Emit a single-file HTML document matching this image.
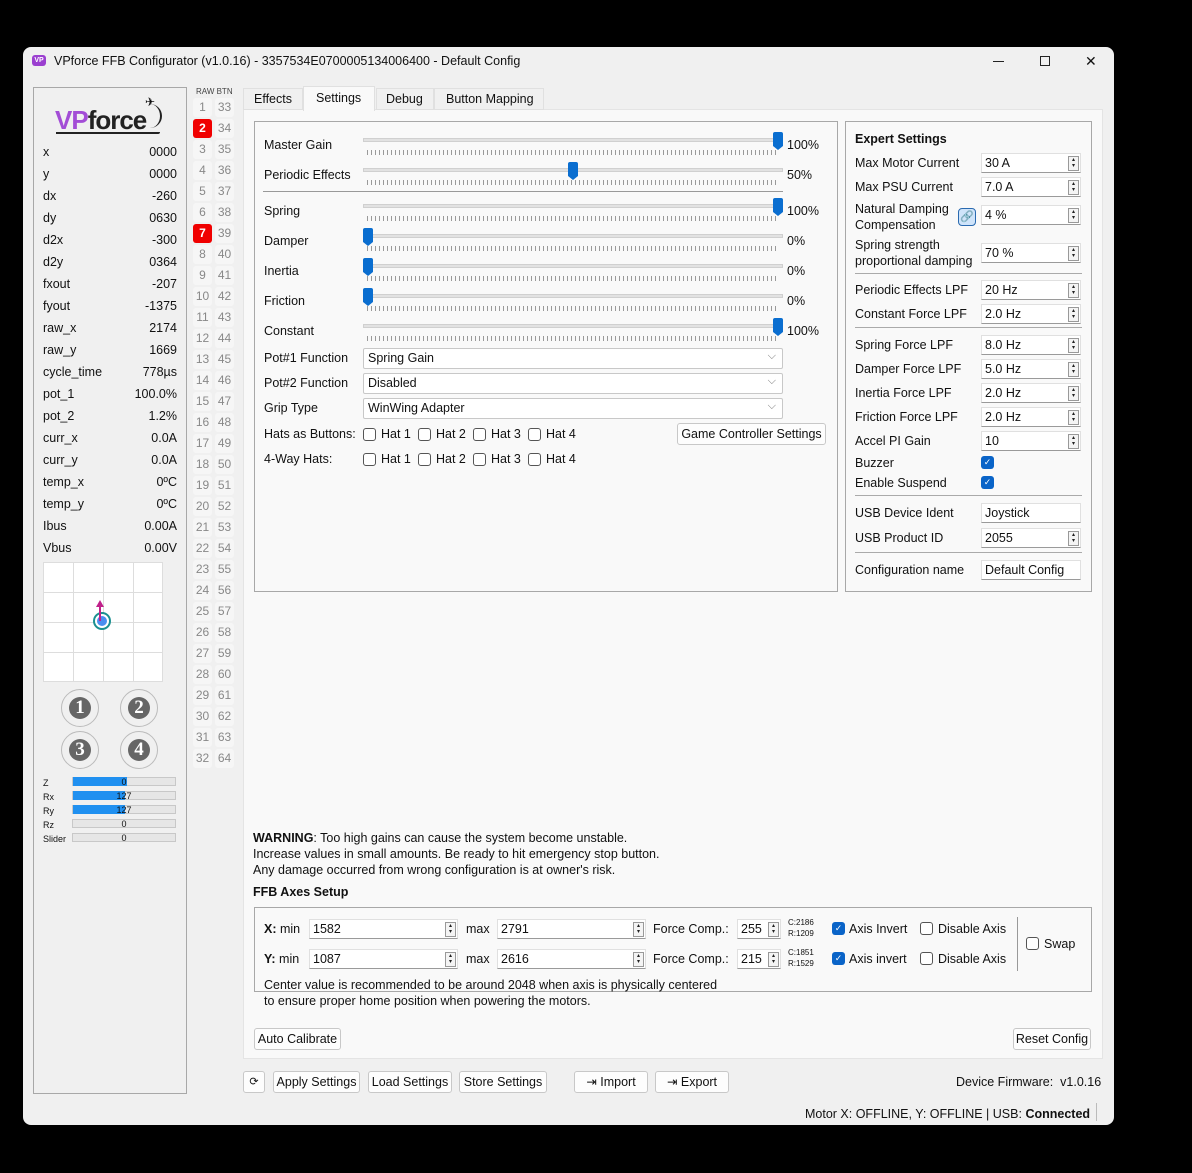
<!DOCTYPE html>
<html><head><meta charset="utf-8"><style>
*{box-sizing:border-box;margin:0;padding:0}
body{width:1192px;height:1173px;background:#000;position:relative;overflow:hidden;font-family:"Liberation Sans",sans-serif;font-size:12.5px;color:#111}
.a{position:absolute}
.t{position:absolute;line-height:16px;white-space:nowrap}
.win{position:absolute;left:23px;top:47px;width:1091px;height:1078px;background:#f0f0f0;border-radius:8px;overflow:hidden}
.box{position:absolute;border:1px solid #a8a8a8}
.btn{position:absolute;border:1px solid #c8c8c8;background:#fdfdfd;border-radius:3px;text-align:center;line-height:20px;height:22px;white-space:nowrap}
.in{position:absolute;background:#fff;border:1px solid #e0e0e0;border-bottom:1px solid #9a9a9a;height:20px;line-height:18px;padding-left:3px;white-space:nowrap}
.sp{position:absolute;right:1px;top:2px;width:11px;height:15px;border:1px solid #999;background:#f4f4f4;font-size:6px;line-height:6px;text-align:center;color:#222}
.cb{position:absolute;width:13px;height:13px;border:1px solid #555;border-radius:3px;background:#fff}
.cbc{position:absolute;width:13px;height:13px;border-radius:3px;background:#0a64c8;color:#fff;font-size:9px;line-height:13px;text-align:center}
.cell{position:absolute;width:19px;height:19px;border-radius:3px;background:#f6f6f6;color:#888;text-align:center;line-height:19px;font-size:12px}
.red{background:#f00000;color:#fff;font-weight:bold}
.trk{position:absolute;left:363px;width:420px;height:4px;background:#e2e2e2;border:1px solid #d0d0d0}
.tk{position:absolute;left:367px;width:412px;height:5px;background:repeating-linear-gradient(90deg,#999 0 1px,transparent 1px 4px)}
.hd{position:absolute;width:10px;height:14px;background:#0a6ed0;border-radius:2px 2px 0 0}
.hd:after{content:"";position:absolute;left:0;top:14px;border-left:5px solid transparent;border-right:5px solid transparent;border-top:4px solid #0a6ed0}
.cmb{position:absolute;left:363px;width:420px;height:21px;background:#fff;border:1px solid #c8c8c8;border-radius:2px;line-height:19px;padding-left:4px}
.cmb:after{content:"⌵";position:absolute;right:6px;top:-2px;color:#777;font-size:11px}
.num{position:absolute;width:38px;height:38px;border-radius:50%;border:1px solid #bbb;background:#f0f0f0}
.num div{position:absolute;left:7px;top:7px;width:22px;height:22px;border-radius:50%;background:#666;color:#fff;font-weight:bold;font-family:"Liberation Serif",serif;font-size:19px;line-height:22px;text-align:center}
.bar{position:absolute;left:72px;width:104px;height:9px;background:#e6e6e6;border:1px solid #c8c8c8;font-size:9px;line-height:8px;text-align:center}
.bar i{position:absolute;left:0;top:-1px;height:9px;background:#2090f0}
.bar span{position:relative}
</style></head><body>
<div class="win">
<div class="a" style="left:9px;top:8px;width:14px;height:11px;background:#9b3fd0;border-radius:3px;color:#fff;font-size:7px;font-weight:bold;line-height:11px;text-align:center">VP</div>
<div class="t" style="left:31px;top:6px">VPforce FFB Configurator (v1.0.16) - 3357534E0700005134006400 - Default Config</div>
<div class="a" style="left:970px;top:14px;width:11px;height:1px;background:#222"></div>
<div class="a" style="left:1017px;top:9px;width:10px;height:10px;border:1px solid #222"></div>
<div class="t" style="left:1062px;top:6px;font-size:14px">✕</div>
</div>
<div class="a" style="left:0;top:0;width:1192px;height:1173px">
<div class="box" style="left:33px;top:87px;width:154px;height:1007px"></div>
<div class="t" style="left:55px;top:106px;font-size:26px;line-height:28px;font-weight:900;letter-spacing:-1px"><span style="color:#a34dd6">VP</span><span style="color:#222">force</span></div>
<div class="a" style="left:56px;top:132px;width:104px;height:2px;background:#222;border-radius:0 0 8px 0"></div>
<div class="a" style="left:150px;top:104px;width:12px;height:24px;border-right:2px solid #222;border-radius:0 12px 12px 0"></div>
<div class="t" style="left:145px;top:94px;font-size:12px">✈</div>
<div class="t" style="left:43px;top:144px;width:134px">x<span style="float:right">0000</span></div>
<div class="t" style="left:43px;top:166px;width:134px">y<span style="float:right">0000</span></div>
<div class="t" style="left:43px;top:188px;width:134px">dx<span style="float:right">-260</span></div>
<div class="t" style="left:43px;top:210px;width:134px">dy<span style="float:right">0630</span></div>
<div class="t" style="left:43px;top:232px;width:134px">d2x<span style="float:right">-300</span></div>
<div class="t" style="left:43px;top:254px;width:134px">d2y<span style="float:right">0364</span></div>
<div class="t" style="left:43px;top:276px;width:134px">fxout<span style="float:right">-207</span></div>
<div class="t" style="left:43px;top:298px;width:134px">fyout<span style="float:right">-1375</span></div>
<div class="t" style="left:43px;top:320px;width:134px">raw_x<span style="float:right">2174</span></div>
<div class="t" style="left:43px;top:342px;width:134px">raw_y<span style="float:right">1669</span></div>
<div class="t" style="left:43px;top:364px;width:134px">cycle_time<span style="float:right">778µs</span></div>
<div class="t" style="left:43px;top:386px;width:134px">pot_1<span style="float:right">100.0%</span></div>
<div class="t" style="left:43px;top:408px;width:134px">pot_2<span style="float:right">1.2%</span></div>
<div class="t" style="left:43px;top:430px;width:134px">curr_x<span style="float:right">0.0A</span></div>
<div class="t" style="left:43px;top:452px;width:134px">curr_y<span style="float:right">0.0A</span></div>
<div class="t" style="left:43px;top:474px;width:134px">temp_x<span style="float:right">0ºC</span></div>
<div class="t" style="left:43px;top:496px;width:134px">temp_y<span style="float:right">0ºC</span></div>
<div class="t" style="left:43px;top:518px;width:134px">Ibus<span style="float:right">0.00A</span></div>
<div class="t" style="left:43px;top:540px;width:134px">Vbus<span style="float:right">0.00V</span></div>
<div class="a" style="left:43px;top:562px;width:120px;height:120px;background:#fff;border:1px solid #ddd;background-image:linear-gradient(90deg,transparent 29px,#ddd 29px,#ddd 30px,transparent 30px),linear-gradient(transparent 29px,#ddd 29px,#ddd 30px,transparent 30px);background-size:30px 30px"></div>
<div class="a" style="left:93px;top:612px;width:18px;height:18px;border-radius:50%;border:2px solid #1a9090;background:#fff"></div>
<div class="a" style="left:97px;top:616px;width:10px;height:10px;border-radius:50%;background:#4a8ef0"></div>
<div class="a" style="left:99px;top:605px;width:2px;height:16px;background:#c0208a"></div>
<div class="a" style="left:96px;top:600px;border-left:4px solid transparent;border-right:4px solid transparent;border-bottom:7px solid #c0208a"></div>
<div class="num" style="left:61px;top:689px"><div>1</div></div>
<div class="num" style="left:120px;top:689px"><div>2</div></div>
<div class="num" style="left:61px;top:731px"><div>3</div></div>
<div class="num" style="left:120px;top:731px"><div>4</div></div>
<div class="t" style="left:43px;top:775px;font-size:9px">Z</div><div class="bar" style="top:777px"><i style="width:54px"></i><span>0</span></div>
<div class="t" style="left:43px;top:789px;font-size:9px">Rx</div><div class="bar" style="top:791px"><i style="width:52px"></i><span>127</span></div>
<div class="t" style="left:43px;top:803px;font-size:9px">Ry</div><div class="bar" style="top:805px"><i style="width:52px"></i><span>127</span></div>
<div class="t" style="left:43px;top:817px;font-size:9px">Rz</div><div class="bar" style="top:819px"><span>0</span></div>
<div class="t" style="left:43px;top:831px;font-size:9px">Slider</div><div class="bar" style="top:833px"><span>0</span></div>
<div class="t" style="left:196px;top:84px;font-size:8px;color:#444">RAW BTN</div>
<div id="cells"></div>
<div class="a" style="left:243px;top:109px;width:860px;height:950px;background:#f9f9f9;border:1px solid #e4e4e4"></div>
<div class="a" style="left:243px;top:88px;width:60px;height:22px;border:1px solid #e0e0e0;background:#f0f0f0"></div>
<div class="t" style="left:254px;top:91px">Effects</div>
<div class="a" style="left:303px;top:86px;width:72px;height:25px;border:1px solid #e0e0e0;border-bottom:none;background:#f9f9f9"></div>
<div class="t" style="left:316px;top:90px">Settings</div>
<div class="a" style="left:376px;top:88px;width:58px;height:22px;border:1px solid #e0e0e0;background:#f0f0f0"></div>
<div class="t" style="left:386px;top:91px">Debug</div>
<div class="a" style="left:434px;top:88px;width:110px;height:22px;border:1px solid #e0e0e0;background:#f0f0f0"></div>
<div class="t" style="left:446px;top:91px">Button Mapping</div>
<div class="box" style="left:254px;top:121px;width:584px;height:471px"></div>
<div class="t" style="left:264px;top:137px">Master Gain</div>
<div class="trk" style="top:138px"></div><div class="tk" style="top:150px"></div><div class="hd" style="left:773px;top:132px"></div>
<div class="t" style="left:787px;top:137px">100%</div>
<div class="t" style="left:264px;top:167px">Periodic Effects</div>
<div class="trk" style="top:168px"></div><div class="tk" style="top:180px"></div><div class="hd" style="left:568px;top:162px"></div>
<div class="t" style="left:787px;top:167px">50%</div>
<div class="a" style="left:263px;top:191px;width:520px;height:1px;background:#999"></div>
<div class="t" style="left:264px;top:203px">Spring</div>
<div class="trk" style="top:204px"></div><div class="tk" style="top:216px"></div><div class="hd" style="left:773px;top:198px"></div>
<div class="t" style="left:787px;top:203px">100%</div>
<div class="t" style="left:264px;top:233px">Damper</div>
<div class="trk" style="top:234px"></div><div class="tk" style="top:246px"></div><div class="hd" style="left:363px;top:228px"></div>
<div class="t" style="left:787px;top:233px">0%</div>
<div class="t" style="left:264px;top:263px">Inertia</div>
<div class="trk" style="top:264px"></div><div class="tk" style="top:276px"></div><div class="hd" style="left:363px;top:258px"></div>
<div class="t" style="left:787px;top:263px">0%</div>
<div class="t" style="left:264px;top:293px">Friction</div>
<div class="trk" style="top:294px"></div><div class="tk" style="top:306px"></div><div class="hd" style="left:363px;top:288px"></div>
<div class="t" style="left:787px;top:293px">0%</div>
<div class="t" style="left:264px;top:323px">Constant</div>
<div class="trk" style="top:324px"></div><div class="tk" style="top:336px"></div><div class="hd" style="left:773px;top:318px"></div>
<div class="t" style="left:787px;top:323px">100%</div>
<div class="t" style="left:264px;top:350px">Pot#1 Function</div><div class="cmb" style="top:348px">Spring Gain</div>
<div class="t" style="left:264px;top:375px">Pot#2 Function</div><div class="cmb" style="top:373px">Disabled</div>
<div class="t" style="left:264px;top:400px">Grip Type</div><div class="cmb" style="top:398px">WinWing Adapter</div>
<div class="t" style="left:264px;top:426px">Hats as Buttons:</div>
<div class="cb" style="left:363px;top:428px"></div><div class="t" style="left:381px;top:426px">Hat 1</div>
<div class="cb" style="left:418px;top:428px"></div><div class="t" style="left:436px;top:426px">Hat 2</div>
<div class="cb" style="left:473px;top:428px"></div><div class="t" style="left:491px;top:426px">Hat 3</div>
<div class="cb" style="left:528px;top:428px"></div><div class="t" style="left:546px;top:426px">Hat 4</div>
<div class="btn" style="left:677px;top:423px;width:149px">Game Controller Settings</div>
<div class="t" style="left:264px;top:451px">4-Way Hats:</div>
<div class="cb" style="left:363px;top:453px"></div><div class="t" style="left:381px;top:451px">Hat 1</div>
<div class="cb" style="left:418px;top:453px"></div><div class="t" style="left:436px;top:451px">Hat 2</div>
<div class="cb" style="left:473px;top:453px"></div><div class="t" style="left:491px;top:451px">Hat 3</div>
<div class="cb" style="left:528px;top:453px"></div><div class="t" style="left:546px;top:451px">Hat 4</div>
<div class="box" style="left:845px;top:121px;width:247px;height:471px"></div>
<div class="t" style="left:855px;top:131px;font-weight:bold">Expert Settings</div>
<div class="t" style="left:855px;top:155px">Max Motor Current</div><div class="in" style="left:981px;top:153px;width:100px">30 A<div class="sp">▴<br>▾</div></div>
<div class="t" style="left:855px;top:179px">Max PSU Current</div><div class="in" style="left:981px;top:177px;width:100px">7.0 A<div class="sp">▴<br>▾</div></div>
<div class="t" style="left:855px;top:201px">Natural Damping<br>Compensation</div>
<div class="a" style="left:958px;top:208px;width:18px;height:18px;border:1px solid #2a6ab0;border-radius:4px;background:#cfe4fa;font-size:11px;text-align:center;line-height:16px">🔗</div>
<div class="in" style="left:981px;top:205px;width:100px">4 %<div class="sp">▴<br>▾</div></div>
<div class="t" style="left:855px;top:237px">Spring strength<br>proportional damping</div><div class="in" style="left:981px;top:243px;width:100px">70 %<div class="sp">▴<br>▾</div></div>
<div class="a" style="left:855px;top:273px;width:227px;height:1px;background:#aaa"></div>
<div class="t" style="left:855px;top:282px">Periodic Effects LPF</div><div class="in" style="left:981px;top:280px;width:100px">20 Hz<div class="sp">▴<br>▾</div></div>
<div class="t" style="left:855px;top:306px">Constant Force LPF</div><div class="in" style="left:981px;top:304px;width:100px">2.0 Hz<div class="sp">▴<br>▾</div></div>
<div class="a" style="left:855px;top:327px;width:227px;height:1px;background:#aaa"></div>
<div class="t" style="left:855px;top:337px">Spring Force LPF</div><div class="in" style="left:981px;top:335px;width:100px">8.0 Hz<div class="sp">▴<br>▾</div></div>
<div class="t" style="left:855px;top:361px">Damper Force LPF</div><div class="in" style="left:981px;top:359px;width:100px">5.0 Hz<div class="sp">▴<br>▾</div></div>
<div class="t" style="left:855px;top:385px">Inertia Force LPF</div><div class="in" style="left:981px;top:383px;width:100px">2.0 Hz<div class="sp">▴<br>▾</div></div>
<div class="t" style="left:855px;top:409px">Friction Force LPF</div><div class="in" style="left:981px;top:407px;width:100px">2.0 Hz<div class="sp">▴<br>▾</div></div>
<div class="t" style="left:855px;top:433px">Accel PI Gain</div><div class="in" style="left:981px;top:431px;width:100px">10<div class="sp">▴<br>▾</div></div>
<div class="t" style="left:855px;top:455px">Buzzer</div><div class="cbc" style="left:981px;top:456px">✓</div>
<div class="t" style="left:855px;top:475px">Enable Suspend</div><div class="cbc" style="left:981px;top:476px">✓</div>
<div class="a" style="left:855px;top:495px;width:227px;height:1px;background:#aaa"></div>
<div class="t" style="left:855px;top:505px">USB Device Ident</div><div class="in" style="left:981px;top:503px;width:100px">Joystick</div>
<div class="t" style="left:855px;top:530px">USB Product ID</div><div class="in" style="left:981px;top:528px;width:100px">2055<div class="sp">▴<br>▾</div></div>
<div class="a" style="left:855px;top:552px;width:227px;height:1px;background:#aaa"></div>
<div class="t" style="left:855px;top:562px">Configuration name</div><div class="in" style="left:981px;top:560px;width:100px">Default Config</div>
<div class="t" style="left:253px;top:830px"><b>WARNING</b>: Too high gains can cause the system become unstable.</div>
<div class="t" style="left:253px;top:846px">Increase values in small amounts. Be ready to hit emergency stop button.</div>
<div class="t" style="left:253px;top:862px">Any damage occurred from wrong configuration is at owner's risk.</div>
<div class="t" style="left:253px;top:884px;font-weight:bold">FFB Axes Setup</div>
<div class="box" style="left:254px;top:907px;width:838px;height:85px"></div>
<div class="t" style="left:264px;top:921px"><b>X:</b> min</div>
<div class="in" style="left:309px;top:919px;width:149px">1582<div class="sp">▴<br>▾</div></div>
<div class="t" style="left:466px;top:921px">max</div>
<div class="in" style="left:497px;top:919px;width:149px">2791<div class="sp">▴<br>▾</div></div>
<div class="t" style="left:653px;top:921px">Force Comp.:</div>
<div class="in" style="left:737px;top:919px;width:44px">255<div class="sp">▴<br>▾</div></div>
<div class="t" style="left:788px;top:917px;font-size:8px;line-height:11px">C:2186<br>R:1209</div>
<div class="cbc" style="left:832px;top:922px">✓</div><div class="t" style="left:849px;top:921px">Axis Invert</div>
<div class="cb" style="left:920px;top:922px"></div><div class="t" style="left:938px;top:921px">Disable Axis</div>
<div class="t" style="left:264px;top:951px"><b>Y:</b> min</div>
<div class="in" style="left:309px;top:949px;width:149px">1087<div class="sp">▴<br>▾</div></div>
<div class="t" style="left:466px;top:951px">max</div>
<div class="in" style="left:497px;top:949px;width:149px">2616<div class="sp">▴<br>▾</div></div>
<div class="t" style="left:653px;top:951px">Force Comp.:</div>
<div class="in" style="left:737px;top:949px;width:44px">215<div class="sp">▴<br>▾</div></div>
<div class="t" style="left:788px;top:947px;font-size:8px;line-height:11px">C:1851<br>R:1529</div>
<div class="cbc" style="left:832px;top:952px">✓</div><div class="t" style="left:849px;top:951px">Axis invert</div>
<div class="cb" style="left:920px;top:952px"></div><div class="t" style="left:938px;top:951px">Disable Axis</div>
<div class="a" style="left:1017px;top:917px;width:1px;height:54px;background:#999"></div>
<div class="cb" style="left:1026px;top:937px"></div><div class="t" style="left:1044px;top:936px">Swap</div>
<div class="t" style="left:264px;top:977px">Center value is recommended to be around 2048 when axis is physically centered</div>
<div class="t" style="left:264px;top:993px">to ensure proper home position when powering the motors.</div>
<div class="btn" style="left:254px;top:1028px;width:87px">Auto Calibrate</div>
<div class="btn" style="left:1013px;top:1028px;width:78px">Reset Config</div>
<div class="btn" style="left:243px;top:1071px;width:22px;font-size:11px">⟳</div>
<div class="btn" style="left:273px;top:1071px;width:87px">Apply Settings</div>
<div class="btn" style="left:368px;top:1071px;width:84px">Load Settings</div>
<div class="btn" style="left:459px;top:1071px;width:88px">Store Settings</div>
<div class="btn" style="left:574px;top:1071px;width:74px">⇥ Import</div>
<div class="btn" style="left:655px;top:1071px;width:74px">⇥ Export</div>
<div class="t" style="left:956px;top:1074px">Device Firmware:&nbsp; v1.0.16</div>
<div class="t" style="left:805px;top:1106px">Motor X: OFFLINE, Y: OFFLINE | USB: <b>Connected</b></div>
<div class="a" style="left:1096px;top:1103px;width:1px;height:18px;background:#bbb"></div>
</div>
<script>
var h='';for(var i=1;i<=32;i++){var y=98+(i-1)*21;h+='<div class="cell'+((i==2||i==7)?' red':'')+'" style="left:193px;top:'+y+'px">'+i+'</div><div class="cell" style="left:215px;top:'+y+'px">'+(i+32)+'</div>';}
document.getElementById('cells').outerHTML=h;
</script>
</body></html>
